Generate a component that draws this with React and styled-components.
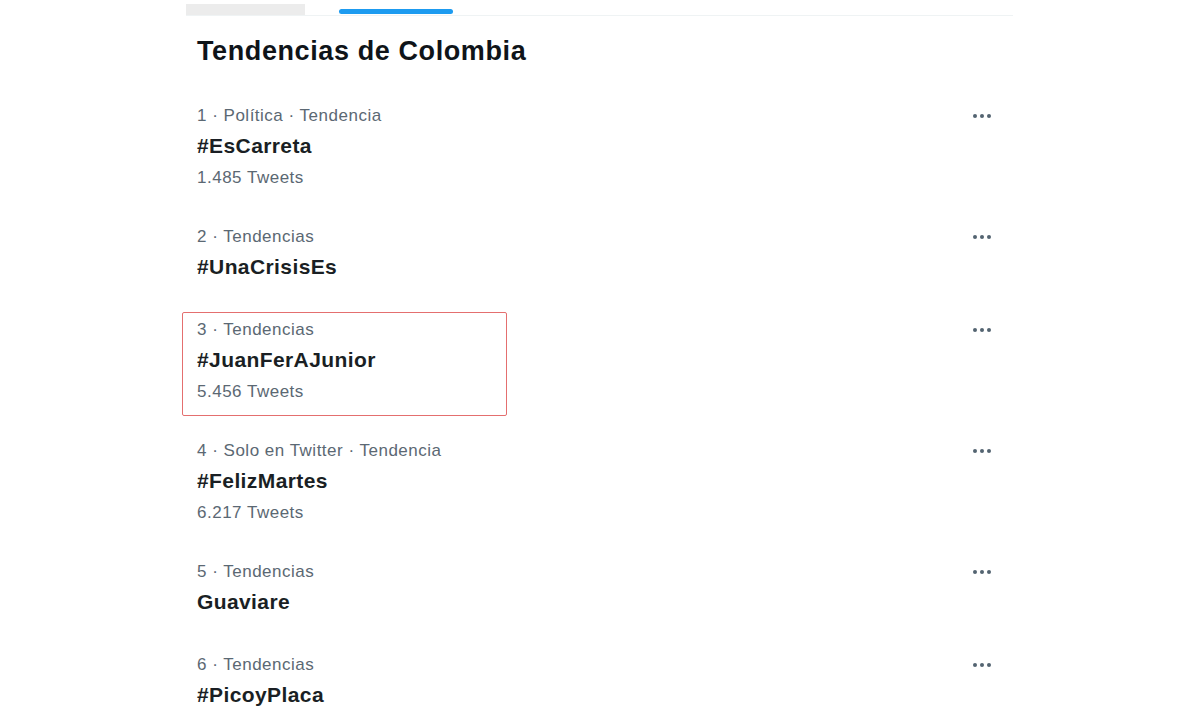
import styled, { createGlobalStyle, css } from 'styled-components';

const GlobalStyle = createGlobalStyle`
    body {
        margin: 0;
        background: #fff;
        font-family: "Liberation Sans", Arial, sans-serif;
    }
`;

const Page = styled.div`
    width: 1200px;
    height: 720px;
    overflow: hidden;
    display: flex;
    padding-left: 186px;
    box-sizing: border-box;
`;

const Column = styled.div`
    width: 827px;
    display: flex;
    flex-direction: column;
`;

const TabStrip = styled.div`
    display: flex;
    align-items: flex-end;
    flex: none;
    height: 15px;
    border-bottom: 1px solid #eff3f4;
`;

const GrayTab = styled.div`
    width: 119px;
    height: 11px;
    background: #ececec;
`;

const ActiveTab = styled.div`
    width: 114px;
    height: 5px;
    margin-left: 34px;
    margin-bottom: 1px;
    border-radius: 3px;
    background: #1d9bf0;
`;

const Title = styled.h1`
    flex: none;
    margin: 0;
    padding: 19px 11px 0;
    height: 52px;
    font-size: 27px;
    line-height: 32px;
    font-weight: 700;
    color: #0f1419;
    letter-spacing: 0.6px;
`;

const Row = styled.div`
    flex: none;
    display: flex;
    justify-content: space-between;
    padding: 19px 22px 19px 11px;
`;

const highlightBox = css`
    &::after {
        content: '';
        position: absolute;
        top: -8px;
        left: -15px;
        width: 323px;
        bottom: -13px;
        border: 1.5px solid #e46f6f;
        border-radius: 2px;
        pointer-events: none;
    }
`;

const TextBlock = styled.div`
    position: relative;
    display: flex;
    flex-direction: column;
    ${p => p.$highlight && highlightBox}
`;

const Meta = styled.div`
    font-size: 17px;
    line-height: 20px;
    color: #5b6873;
    letter-spacing: 0.5px;
`;

const Name = styled.div`
    margin-top: 5px;
    font-size: 21px;
    line-height: 30px;
    font-weight: 700;
    color: #1a1f24;
    letter-spacing: 0.4px;
`;

const Count = styled.div`
    margin-top: 6px;
    font-size: 17px;
    line-height: 22px;
    color: #5b6873;
    letter-spacing: 0.5px;
`;

const More = styled.div`
    display: flex;
    gap: 3px;
    height: 20px;
    align-items: center;
`;

const Dot = styled.span`
    width: 4px;
    height: 4px;
    border-radius: 50%;
    background: #536471;
`;

const trends = [
    { meta: '1 · Política · Tendencia', name: '#EsCarreta', count: '1.485 Tweets' },
    { meta: '2 · Tendencias', name: '#UnaCrisisEs' },
    { meta: '3 · Tendencias', name: '#JuanFerAJunior', count: '5.456 Tweets', highlight: true },
    { meta: '4 · Solo en Twitter · Tendencia', name: '#FelizMartes', count: '6.217 Tweets' },
    { meta: '5 · Tendencias', name: 'Guaviare' },
    { meta: '6 · Tendencias', name: '#PicoyPlaca' },
];

export default function App() {
    return <Page>
        <GlobalStyle />
        <Column>
            <TabStrip>
                <GrayTab />
                <ActiveTab />
            </TabStrip>
            <Title>Tendencias de Colombia</Title>
            {trends.map(t => (
                <Row key={t.name}>
                    <TextBlock $highlight={t.highlight}>
                        <Meta>{t.meta}</Meta>
                        <Name>{t.name}</Name>
                        {t.count && <Count>{t.count}</Count>}
                    </TextBlock>
                    <More>
                        <Dot /><Dot /><Dot />
                    </More>
                </Row>
            ))}
        </Column>
    </Page>
}
